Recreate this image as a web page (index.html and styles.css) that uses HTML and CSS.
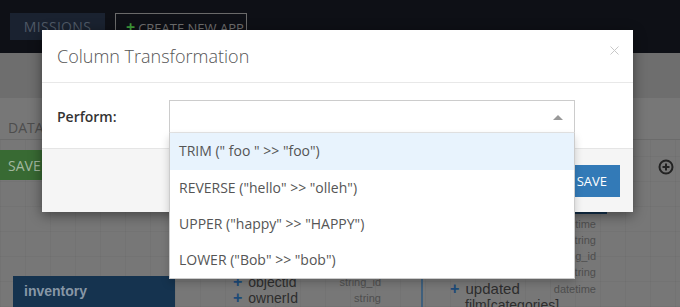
FILE: index.html
```html
<!DOCTYPE html>
<html lang="en">
<head>
<meta charset="UTF-8">
<meta name="viewport" content="width=device-width, initial-scale=1.0">
<title>Column Transformation</title>
<link rel="stylesheet" href="styles.css">
</head>
<body>

<div class="app">
    <header class="topbar">
        <a class="nav-btn">MISSIONS</a>
        <a class="new-btn"><span class="plus">+</span>CREATE NEW APP</a>
    </header>
    <div class="subbar"></div>
    <nav class="tabs">
        <span class="tab">DATA</span>
    </nav>
    <main class="canvas">
        <div class="toolbar">
            <button class="save-green">SAVE</button>
            <svg class="add-icon" width="16" height="16" viewBox="0 0 16 16">
                <circle cx="8" cy="8" r="6.5" fill="none" stroke="#222" stroke-width="2"/>
                <path d="M8 4.5v7M4.5 8h7" stroke="#222" stroke-width="2"/>
            </svg>
        </div>

        <!-- diagram nodes -->
        <div class="node node-inventory">
            <div class="node-head">inventory</div>
        </div>
        <div class="node node-mid">
            <div class="field"><span class="name"><b>+</b> objectid</span><span class="type">string_id</span></div>
            <div class="field"><span class="name"><b>+</b> ownerId</span><span class="type">string</span></div>
        </div>
        <div class="link"></div>
        <div class="node node-right">
            <div class="node-head"></div>
            <div class="field"><span class="name"></span><span class="type">datetime</span></div>
            <div class="field"><span class="name"></span><span class="type">string</span></div>
            <div class="field"><span class="name"></span><span class="type">string_id</span></div>
            <div class="field"><span class="name"></span><span class="type">string</span></div>
            <div class="field big"><span class="name"><b>+</b> updated</span><span class="type">datetime</span></div>
            <div class="field sub"><span class="name">film[categories]</span></div>
        </div>
    </main>
</div>

<div class="modal">
    <div class="modal-header">
        <h4>Column Transformation</h4>
        <svg class="close" width="9" height="9" viewBox="0 0 9 9">
            <path d="M0.5 0.5l8 8M8.5 0.5l-8 8" stroke="#c8c8c8" stroke-width="1"/>
        </svg>
    </div>
    <div class="modal-body">
        <label>Perform:</label>
        <div class="select">
            <div class="select-box"><span class="caret"></span></div>
            <ul class="options">
                <li class="active">TRIM (" foo " &gt;&gt; "foo")</li>
                <li>REVERSE ("hello" &gt;&gt; "olleh")</li>
                <li>UPPER ("happy" &gt;&gt; "HAPPY")</li>
                <li>LOWER ("Bob" &gt;&gt; "bob")</li>
            </ul>
        </div>
    </div>
    <div class="modal-footer">
        <button class="btn-save">SAVE</button>
    </div>
</div>

</body>
</html>
```

FILE: styles.css
```css
body {
    margin: 0;
    padding: 0;
    height: 307px;
    overflow: hidden;
    font-family: "Open Sans", Arial, sans-serif;
    background-color: #777;
}

/* page behind the modal (already dimmed) */
.app {
    height: 307px;
}
.topbar {
    height: 53px;
    background-color: #0e1016;
    display: flex;
    align-items: flex-start;
    padding: 13px 0 0 10px;
    box-sizing: border-box;
    gap: 10px;
}
.nav-btn {
    width: 95px;
    height: 27px;
    background-color: #1a2230;
    color: #4f5966;
    font-size: 14px;
    line-height: 27px;
    text-align: center;
    letter-spacing: 0.3px;
}
.new-btn {
    height: 27px;
    width: 132px;
    border: 1px solid #6a6a6a;
    color: #6e6e6e;
    font-size: 13px;
    line-height: 27px;
    padding-left: 10px;
    box-sizing: border-box;
}
.new-btn .plus {
    color: #3e9b3a;
    font-weight: bold;
    font-size: 16px;
    margin-right: 3px;
}
.subbar {
    height: 45px;
    background-color: #6e6e6e;
}
.tabs {
    height: 41px;
    background-color: #777;
    border-bottom: 1px solid #6b6b6b;
    padding-left: 8px;
}
.tab {
    display: inline-block;
    line-height: 59px;
    font-size: 14px;
    color: #4d4d4d;
}
.canvas {
    position: relative;
    height: 167px;
    background-color: #777;
    background-image:
        repeating-linear-gradient(90deg, rgba(0,0,0,0.035) 0, rgba(0,0,0,0.035) 1px, transparent 1px, transparent 25px),
        repeating-linear-gradient(0deg, rgba(0,0,0,0.035) 0, rgba(0,0,0,0.035) 1px, transparent 1px, transparent 25px);
}
.toolbar {
    display: flex;
    justify-content: space-between;
    align-items: center;
    padding: 10px 6px 0 0;
}
.save-green {
    height: 30px;
    width: 60px;
    border: none;
    background-color: #386a33;
    color: #a3b8a0;
    font-family: "Open Sans", Arial, sans-serif;
    font-size: 14px;
    text-align: left;
    padding-left: 8px;
}
.add-icon {
    margin-top: 4px;
}

.node {
    position: absolute;
    font-family: "Liberation Sans", Arial, sans-serif;
}
.node-inventory {
    left: 13px;
    top: 136px;
    width: 162px;
}
.node-inventory .node-head {
    height: 34px;
    background-color: #15334f;
    color: #8797a6;
    font-weight: bold;
    font-size: 14px;
    line-height: 30px;
    padding-left: 11px;
}
.node-mid {
    left: 233px;
    top: 134px;
    width: 148px;
}
.field {
    display: flex;
    justify-content: space-between;
    align-items: center;
    height: 16px;
    line-height: 16px;
}
.field .name {
    color: #2d2d2d;
    font-size: 14px;
}
.field .name b {
    display: inline-block;
    line-height: 14px;
    color: #1c4a78;
    font-size: 16px;
    margin-right: 2px;
}
.field .type {
    color: #4e4e4e;
    font-size: 11px;
}
.link {
    position: absolute;
    left: 421px;
    top: 72px;
    width: 2px;
    height: 100px;
    background-color: #3f5f7c;
}
.node-right {
    left: 450px;
    top: 40px;
    width: 146px;
}
.node-right .node-head {
    height: 34px;
    margin: 0 -11px 2px -10px;
    background-color: #15334f;
}
.node-right .field.big {
    height: 17px;
}
.node-right .field.big .name {
    font-size: 15px;
}
.node-right .field.sub .name {
    padding-left: 15px;
}

/* modal */
.modal {
    position: absolute;
    left: 42px;
    top: 30px;
    width: 591px;
    background-color: #fff;
    box-shadow: 0 3px 12px rgba(0, 0, 0, 0.45);
}
.modal-header {
    display: flex;
    justify-content: space-between;
    align-items: flex-start;
    padding: 13px 14px 13px 15px;
    border-bottom: 1px solid #e8e8e8;
}
.modal-header h4 {
    margin: 0;
    font-size: 18px;
    line-height: 26px;
    font-weight: 300;
    color: #555;
}
.close {
    margin-top: 3px;
}
.modal-body {
    display: flex;
    align-items: center;
    padding: 17px 58px 15px 15px;
}
.modal-body label {
    width: 112px;
    font-size: 14px;
    font-weight: 600;
    color: #333;
}
.select {
    position: relative;
    flex: 1;
}
.select-box {
    height: 33px;
    box-sizing: border-box;
    border: 1px solid #ccc;
    border-bottom-color: #e5e5e5;
    position: relative;
}
.caret {
    position: absolute;
    right: 11px;
    top: 14px;
    border-left: 5px solid transparent;
    border-right: 5px solid transparent;
    border-bottom: 5px solid #999;
}
.options {
    position: absolute;
    top: 100%;
    left: 0;
    right: 0;
    margin: 0;
    padding: 0;
    list-style: none;
    background-color: #fff;
    border: 1px solid #ccc;
    border-top: none;
    box-shadow: 0 4px 8px rgba(0, 0, 0, 0.18);
    z-index: 2;
}
.options li {
    height: 36px;
    line-height: 36px;
    padding-left: 9px;
    font-size: 14px;
    color: #555;
    white-space: pre;
}
.options li.active {
    background-color: #e8f3fd;
    height: 37px;
}
.modal-footer {
    background-color: #f5f5f5;
    border-top: 1px solid #e5e5e5;
    padding: 16px 13px 15px;
    text-align: right;
}
.btn-save {
    height: 32px;
    padding: 0 13px;
    border: none;
    background-color: #337ab7;
    color: #fff;
    font-family: "Open Sans", Arial, sans-serif;
    font-size: 13px;
}
```
